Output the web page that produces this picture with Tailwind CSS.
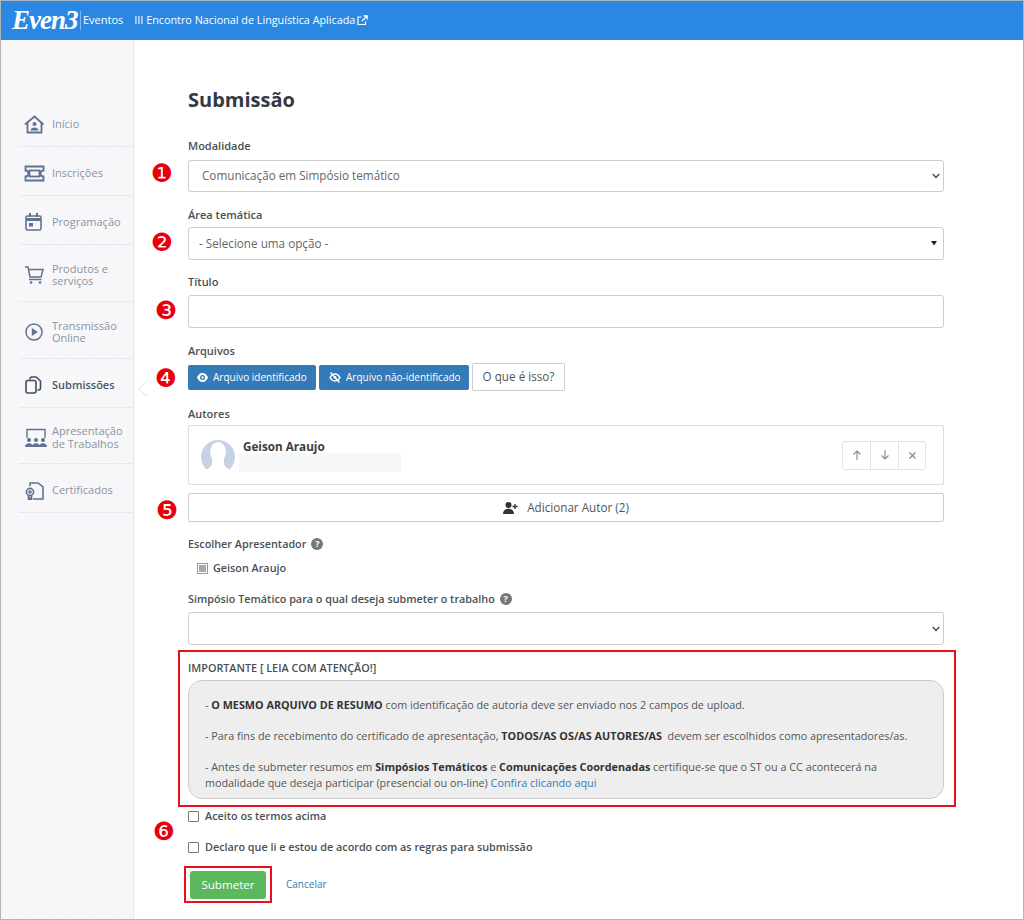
<!DOCTYPE html>
<html lang="pt-BR">
<head>
<meta charset="utf-8">
<title>Submissão</title>
<script src="https://cdn.jsdelivr.net/npm/@tailwindcss/browser@4"></script>
</head>
<body class="bg-white">
<div class="relative w-[1024px] h-[920px] overflow-hidden border border-[#b5b5b5] border-t-[#a9b6c2] flex flex-col [font-family:'Open_Sans',sans-serif] text-[#555]">
  <header class="h-[39px] shrink-0 bg-[#2a88e2] flex items-center text-white">
    <span class="ml-[11px] w-[66px] text-[27px] leading-none italic [font-family:'Liberation_Serif',serif] font-bold tracking-[-1px]">Even3</span>
    <span class="w-px h-[19px] bg-white/40 ml-[2px]"></span>
    <span class="ml-[2px] text-[11px] font-medium">Eventos</span>
    <span class="ml-[11px] text-[10.8px]">III Encontro Nacional de Linguística Aplicada</span>
    <svg class="ml-[2px]" width="11" height="11" viewBox="0 0 11 11" fill="none" stroke="#fff" stroke-width="1.2"><path d="M8.500 6.500v3h-7.500v-7.500h3.500"/><path d="M5 6l5-5M6.500 .8h3.700v3.700"/></svg>
  </header>
  <div class="flex flex-1 min-h-0">
    <aside class="relative w-[133px] shrink-0 bg-[#f7f7f9] bg-[radial-gradient(#ffffff_1px,transparent_1px)] bg-[size:13px_13px] border-r border-[#e3e6ee] pt-[58px] text-[11px] leading-[12.5px] text-[#8a94a6]">
      <nav class="ml-[18px]">
        <a class="flex items-center h-[49px] pt-[4px] border-b border-[#e4e9f2]">
          <svg class="ml-[5px] mr-[7px] shrink-0" width="21" height="19" viewBox="0 0 21 19" fill="none" stroke="#5f7391" stroke-width="1.8"><path d="M1 9.500 10.500 1.500l9 8"/><path d="M3.500 8v9.500h14V8"/><circle cx="10.500" cy="9" r="2" fill="#5f7391" stroke="none"/><path d="M6.500 15.500c0-4 8-4 8 0z" fill="#5f7391" stroke="none"/></svg>
          <span>Início</span>
        </a>
        <a class="flex items-center h-[49px] pt-[4px] border-b border-[#e4e9f2]">
          <svg class="ml-[5px] mr-[7px] shrink-0" width="21" height="17" viewBox="0 0 21 17" fill="none" stroke="#5f7391" stroke-width="1.800"><path d="M1.500 1.500h18v4a3 3 0 0 0 0 6v4h-18v-4a3 3 0 0 0 0-6z"/><rect x="5.500" y="5.500" width="10" height="6"/></svg>
          <span>Inscrições</span>
        </a>
        <a class="flex items-center h-[49px] pt-[4px] border-b border-[#e4e9f2]">
          <svg class="ml-[6px] mr-[10px] shrink-0" width="17" height="18" viewBox="0 0 17 18" fill="none" stroke="#5f7391" stroke-width="1.6"><rect x="1" y="3" width="15" height="14" rx="1.5"/><path d="M1 6.500h15" stroke-width="3"/><path d="M5 0v4M12 0v4" stroke-width="2"/><rect x="4" y="10" width="4" height="3.500" fill="#5f7391" stroke="none"/></svg>
          <span>Programação</span>
        </a>
        <a class="flex items-center h-[57px] pt-[4px] border-b border-[#e4e9f2]">
          <svg class="ml-[6px] mr-[8px] shrink-0" width="19" height="18" viewBox="0 0 19 18" fill="none" stroke="#5f7391" stroke-width="1.5"><path d="M0 1h3l2 10h11l2-7.500H3.700"/><path d="M4 13.500h12.500"/><circle cx="6" cy="16.500" r="1.300" fill="#5f7391" stroke="none"/><circle cx="15" cy="16.500" r="1.300" fill="#5f7391" stroke="none"/></svg>
          <span>Produtos e<br>serviços</span>
        </a>
        <a class="flex items-center h-[57px] pt-[4px] border-b border-[#e4e9f2]">
          <svg class="ml-[6px] mr-[9px] shrink-0" width="18" height="18" viewBox="0 0 18 18" fill="none" stroke="#5f7391" stroke-width="1.5"><circle cx="9" cy="9" r="8"/><path d="M6.800 5v8L13 9z" fill="#5f7391" stroke="none"/></svg>
          <span>Transmissão<br>Online</span>
        </a>
        <a class="flex items-center h-[49px] pt-[4px] border-b border-[#e4e9f2] font-semibold text-[#4a5568]">
          <svg class="ml-[6px] mr-[10px] shrink-0" width="17" height="18" viewBox="0 0 17 18" fill="none" stroke="#3f4d63" stroke-width="1.6"><rect x="1" y="4.500" width="10" height="12.500" rx="2" fill="#f7f7f9"/><path d="M5 3.500V3a2 2 0 0 1 2-2h4l4.500 4v7a2 2 0 0 1-2 2h-1"/></svg>
          <span>Submissões</span>
        </a>
        <a class="flex items-center h-[56px] pt-[4px] border-b border-[#e4e9f2]">
          <svg class="ml-[6px] mr-[5px] shrink-0" width="22" height="20" viewBox="0 0 22 20" fill="none" stroke="#5f7391" stroke-width="1.4"><path d="M2 10V1.500h18V10"/><g fill="#5f7391" stroke="none"><circle cx="4" cy="12" r="2"/><circle cx="11" cy="12" r="2"/><circle cx="18" cy="12" r="2"/><path d="M0 19c0-5 8-5 8 0zM7 19c0-5 8-5 8 0zM14 19c0-5 8-5 8 0z"/></g></svg>
          <span>Apresentação<br>de Trabalhos</span>
        </a>
        <a class="flex items-center h-[49px] pt-[4px] border-b border-[#e4e9f2]">
          <svg class="ml-[6px] mr-[8px] shrink-0" width="19" height="19" viewBox="0 0 19 19" fill="none" stroke="#5f7391" stroke-width="1.6"><path d="M5 5V2h8l5 4v12H8"/><circle cx="5" cy="11" r="3.600"/><circle cx="5" cy="11" r="1" fill="#5f7391"/><path d="M3.500 14.500V18L5 17l1.500 1v-3.500"/></svg>
          <span>Certificados</span>
        </a>
      </nav>
      <svg class="absolute left-[137px] top-[340px]" width="10" height="17" viewBox="0 0 10 17" fill="none" stroke="#d8dde8" stroke-width="1"><path d="M9.500 .5 .7 8.500l8.800 8"/></svg>
    </aside>

    <main class="relative flex-1 min-w-0 pl-[54px] pr-[79px] pt-[48px] text-[#555]">
      <h1 class="text-[20px] leading-[24px] font-bold text-[#333a42] mb-[27px]">Submissão</h1>

      <label class="block text-[11px] leading-[14px] font-semibold text-[#4a4f55] mb-[7px]">Modalidade</label>
      <div class="relative mb-[16px]">
        <select class="block w-full h-[32px] appearance-none rounded-[3px] border border-[#ccc] bg-white pl-[13px] text-[11.7px] text-[#666]"><option>Comunicação em Simpósio temático</option></select>
        <svg class="absolute right-[4px] top-[13px]" width="8" height="6" viewBox="0 0 8 6" fill="none" stroke="#444" stroke-width="1.3"><path d="M.8 1 4 4.500 7.200 1"/></svg>
      </div>

      <label class="block text-[11px] leading-[14px] font-semibold text-[#4a4f55] mb-[5px]">Área temática</label>
      <div class="relative mb-[15px]">
        <select class="block w-full h-[33px] appearance-none rounded-[3px] border border-[#ccc] bg-white pl-[10px] text-[11.7px] text-[#666]"><option>- Selecione uma opção -</option></select>
        <svg class="absolute right-[7px] top-[14px]" width="6" height="5" viewBox="0 0 6 5" fill="#222"><path d="M0 0h6L3 4.500z"/></svg>
      </div>

      <label class="block text-[11px] leading-[14px] font-semibold text-[#4a4f55] mb-[6px]">Título</label>
      <input type="text" class="block w-full h-[33px] rounded-[3px] border border-[#ccc] bg-white mb-[16px]">

      <label class="block text-[11px] leading-[14px] font-semibold text-[#4a4f55] mb-[5px]">Arquivos</label>
      <div class="flex items-center mb-[16px]">
        <button class="flex items-center h-[25px] w-[128px] pl-[9px] rounded-[2px] bg-[#337ab7] text-white text-[10px]">
          <svg class="mr-[5px]" width="11" height="9" viewBox="0 0 11 9" fill="#fff"><path d="M5.500 0C3 0 1 1.800 0 4.500 1 7.200 3 9 5.500 9S10 7.200 11 4.500C10 1.800 8 0 5.500 0zm0 7a2.500 2.500 0 1 1 0-5 2.500 2.500 0 0 1 0 5zm0-1.300a1.200 1.200 0 1 0 0-2.400 1.200 1.200 0 0 0 0 2.400z"/></svg>
          Arquivo identificado
        </button>
        <button class="flex items-center h-[25px] w-[150px] ml-[3px] pl-[10px] rounded-[2px] bg-[#337ab7] text-white text-[10px]">
          <svg class="mr-[5px]" width="12" height="11" viewBox="0 0 12 11" fill="none" stroke="#fff" stroke-width="1.4"><path d="M1 5.500C2.500 2.800 4 2 6 2s3.500.8 5 3.500C9.500 8.200 8 9 6 9S2.500 8.200 1 5.500z"/><circle cx="6" cy="5.500" r="1.400" fill="#fff" stroke="none"/><path d="M1.500.5l9 10"/></svg>
          Arquivo não-identificado
        </button>
        <button class="h-[28px] w-[93px] ml-[3px] rounded-[2px] border border-[#ccc] bg-white text-[11.7px] text-[#555]">O que é isso?</button>
      </div>

      <label class="block text-[11px] leading-[14px] font-semibold text-[#4a4f55] mb-[4px]">Autores</label>
      <div class="flex items-center h-[60px] rounded-[2px] border border-[#ddd] pl-[12px] pr-[17px] mb-[8px]">
        <svg class="shrink-0" width="34" height="30" viewBox="0 0 34 30"><circle cx="17" cy="17" r="17" fill="#c8d1e4"/><ellipse cx="17" cy="12" rx="8" ry="10" fill="#fff"/><path d="M11 18h12v6q1 4 7 6H4q6-2 7-6z" fill="#fff"/></svg>
        <div class="ml-[8px] flex-1">
          <div class="h-[15px] text-[11.7px] leading-[17px] font-bold text-[#3d3d3d]">Geison Araujo</div>
          <div class="ml-[-4px] w-[162px] h-[19px] bg-[#f6f7f8]"></div>
        </div>
        <div class="flex h-[29px] rounded-[3px] border border-[#e2e2e2] text-[#888]">
          <span class="w-[27px] flex items-center justify-center"><svg width="10" height="10" viewBox="0 0 10 10" fill="none" stroke="#888" stroke-width="1.100"><path d="M5 10V1M1.500 4.500 5 1l3.500 3.500"/></svg></span>
          <span class="w-[29px] flex items-center justify-center border-x border-[#e2e2e2]"><svg width="10" height="10" viewBox="0 0 10 10" fill="none" stroke="#888" stroke-width="1.100"><path d="M5 0v9M1.500 5.500 5 9l3.500-3.500"/></svg></span>
          <span class="w-[26px] flex items-center justify-center"><svg width="7" height="7" viewBox="0 0 7 7" fill="none" stroke="#888" stroke-width="1.200"><path d="M.5.500l6 6M6.500.500l-6 6"/></svg></span>
        </div>
      </div>
      <button class="flex items-center justify-center w-full h-[29px] rounded-[2px] border border-[#ccc] bg-white text-[11.7px] text-[#555] mb-[15px]">
        <svg class="mr-[9px]" width="15" height="12" viewBox="0 0 15 12" fill="#333"><circle cx="5.500" cy="3" r="3"/><path d="M0 12c0-7 11-7 11 0z"/><path d="M12 2v5M9.500 4.500h5" stroke="#333" stroke-width="1.300"/></svg>
        Adicionar Autor (2)
      </button>

      <div class="flex items-center h-[14px] text-[10.8px] font-semibold text-[#4a4f55] mb-[10px]">Escolher Apresentador
        <span class="ml-[5px] w-[12px] h-[12px] rounded-full bg-[#777] text-white text-[9px] leading-[12px] font-bold text-center">?</span>
      </div>
      <div class="flex items-center h-[14px] ml-[9px] text-[10.8px] font-semibold text-[#4a4f55] mb-[17px]">
        <span class="w-[11px] h-[11px] border border-[#999] bg-white flex items-center justify-center mr-[5px]"><span class="w-[7px] h-[7px] bg-[#aaa]"></span></span>Geison Araujo
      </div>
      <div class="flex items-center h-[14px] text-[10.8px] font-semibold text-[#4a4f55] mb-[6px]">Simpósio Temático para o qual deseja submeter o trabalho
        <span class="ml-[5px] w-[12px] h-[12px] rounded-full bg-[#777] text-white text-[9px] leading-[12px] font-bold text-center">?</span>
      </div>
      <div class="relative mb-[5px]">
        <select class="block w-full h-[33px] appearance-none rounded-[3px] border border-[#ccc] bg-white"><option></option></select>
        <svg class="absolute right-[4px] top-[14px]" width="8" height="6" viewBox="0 0 8 6" fill="none" stroke="#444" stroke-width="1.300"><path d="M.8 1 4 4.500 7.200 1"/></svg>
      </div>

      <section class="ml-[-10px] w-[778px] h-[157px] border-2 border-[#e8101c] pl-[8px] pt-[8px]">
        <p class="text-[10.8px] leading-[15px] font-semibold text-[#4a4f55] mb-[5px]">IMPORTANTE [ LEIA COM ATENÇÃO!]</p>
        <div class="w-[756px] h-[119px] rounded-[14px] border border-[#ccc] bg-[#eeeeee] pl-[16px] pt-[16px] text-[10.8px] leading-[16px] text-[#555]">
          <p class="mb-[15px]">- <b class="font-bold text-[#333]">O MESMO ARQUIVO DE RESUMO</b> com identificação de autoria deve ser enviado nos 2 campos de upload.</p>
          <p class="mb-[15px]">- Para fins de recebimento do certificado de apresentação, <b class="font-bold text-[#333]">TODOS/AS OS/AS AUTORES/AS</b>&nbsp; devem ser escolhidos como apresentadores/as.</p>
          <p>- Antes de submeter resumos em <b class="font-bold text-[#333]">Simpósios Temáticos</b> e <b class="font-bold text-[#333]">Comunicações Coordenadas</b> certifique-se que o ST ou a CC acontecerá na<br>modalidade que deseja participar (presencial ou on-line) <a class="text-[#337ab7]">Confira clicando aqui</a></p>
        </div>
      </section>

      <div class="flex items-center h-[16px] mt-[1px] text-[10.8px] font-semibold text-[#4a4f55] mb-[15px]"><span class="w-[11px] h-[11px] border border-[#777] bg-white rounded-[1px] mr-[6px]"></span>Aceito os termos acima</div>
      <div class="flex items-center h-[16px] text-[10.8px] font-semibold text-[#4a4f55] mb-[11px]"><span class="w-[11px] h-[11px] border border-[#777] bg-white rounded-[1px] mr-[6px]"></span>Declaro que li e estou de acordo com as regras para submissão</div>

      <div class="flex items-center">
        <span class="ml-[-4px] w-[88px] h-[37px] border-2 border-[#e8101c] flex items-center justify-center">
          <button class="w-[76px] h-[28px] rounded-[3px] bg-[#5cb85c] text-white text-[11.6px]">Submeter</button>
        </span>
        <a class="ml-[14px] text-[10px] text-[#337ab7]">Cancelar</a>
      </div>

      <!-- numbered callouts laid over the form -->
      <span class="absolute left-[15px] top-[120px] w-[26px] h-[26px] flex items-center justify-center text-[#e8000d] text-[25px] leading-none [font-family:'DejaVu_Sans',sans-serif]">❶</span>
      <span class="absolute left-[15px] top-[189px] w-[26px] h-[26px] flex items-center justify-center text-[#e8000d] text-[25px] leading-none [font-family:'DejaVu_Sans',sans-serif]">❷</span>
      <span class="absolute left-[19px] top-[257px] w-[26px] h-[26px] flex items-center justify-center text-[#e8000d] text-[25px] leading-none [font-family:'DejaVu_Sans',sans-serif]">❸</span>
      <span class="absolute left-[19px] top-[325px] w-[26px] h-[26px] flex items-center justify-center text-[#e8000d] text-[25px] leading-none [font-family:'DejaVu_Sans',sans-serif]">❹</span>
      <span class="absolute left-[20px] top-[457px] w-[26px] h-[26px] flex items-center justify-center text-[#e8000d] text-[25px] leading-none [font-family:'DejaVu_Sans',sans-serif]">❺</span>
      <span class="absolute left-[17px] top-[778px] w-[26px] h-[26px] flex items-center justify-center text-[#e8000d] text-[25px] leading-none [font-family:'DejaVu_Sans',sans-serif]">❻</span>
    </main>
  </div>
</div>
</body>
</html>
